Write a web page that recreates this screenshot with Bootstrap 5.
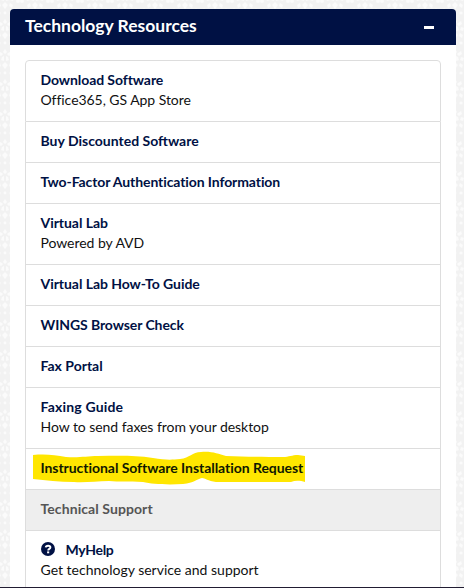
<!DOCTYPE html>
<html lang="en">
<head>
<meta charset="utf-8">
<meta name="viewport" content="width=device-width, initial-scale=1">
<title>Technology Resources</title>
<link href="https://cdn.jsdelivr.net/npm/bootstrap@5.3.0/dist/css/bootstrap.min.css" rel="stylesheet">
<style>
body{height:588px;font-family:Lato,"Open Sans",sans-serif;font-size:14px;line-height:20px;color:#111;padding:9px 8px 0 10px;border-bottom:1px solid #211c32;background:#f2f2f2}
.damask{z-index:-1}
.panel{--bs-card-border-width:0;height:100%;border-radius:4px 4px 0 0}
.panel-head{flex:none;height:36px;background:#001144;padding:0 22px 3px 15px}
.panel-title{font-size:17.5px;font-weight:700;line-height:20px}
.toggle-bar{width:10px;height:3px;margin-top:4px}
.panel-body{padding:15px 15px 0}
.links{--bs-list-group-border-color:#ddd;--bs-list-group-border-radius:4px;--bs-list-group-color:#111;letter-spacing:-.05px}
.links .list-group-item{padding:9px 14.5px 11px}
.links a{color:#001144;font-weight:700;text-decoration:none}
.links .section-row{background:#eee;color:#555;font-weight:700;letter-spacing:.08px}
.ls-a{letter-spacing:-.1px}
.ls-b{letter-spacing:-.08px}
.ls-c{letter-spacing:.18px}
.ls-d{letter-spacing:-.3px}
.ls-0{letter-spacing:0}
.marker{left:6px;top:2px;width:276px;height:36px}
.links .marked{color:#101800}
.help-icon{width:14px;height:14px;margin:-2px 11px 0 0}
</style>
</head>
<body class="overflow-hidden">
<svg class="damask position-absolute top-0 start-0 w-100 h-100" aria-hidden="true">
<defs><pattern id="damask" width="30" height="30" patternUnits="userSpaceOnUse" patternTransform="translate(-10 -14)">
<g fill="#fbfbfb">
<path d="M15 3l2 3-2 2-2-2zM13 8l-4-3-1 3 3 2zM17 8l4-3 1 3-3 2zM12 11l2-1v5l-3-1zM18 11l-2-1v5l3-1zM9 11l-3 1 1 3 3-1zM21 11l3 1-1 3-3-1zM15 16l3 3-3 4-3-4zM10 17l1 3-3 2-1-3zM20 17l-1 3 3 2 1-3z"/>
<circle cx="0" cy="0" r="3"/><circle cx="30" cy="0" r="3"/><circle cx="0" cy="30" r="3"/><circle cx="30" cy="30" r="3"/>
<circle cx="3" cy="6" r="1.5"/><circle cx="27" cy="6" r="1.5"/><circle cx="2" cy="15" r="2"/><circle cx="28" cy="15" r="2"/><circle cx="4" cy="24" r="1.6"/><circle cx="26" cy="24" r="1.6"/><circle cx="9" cy="27" r="1.6"/><circle cx="21" cy="27" r="1.6"/><circle cx="15" cy="27" r="1.4"/>
</g></pattern></defs>
<rect width="100%" height="100%" fill="url(#damask)"/>
</svg>
<section class="card panel overflow-hidden">
  <div class="panel-head d-flex align-items-center justify-content-between text-white">
    <h1 class="panel-title m-0">Technology Resources</h1>
    <span class="toggle-bar bg-white" role="button" aria-label="Collapse"></span>
  </div>
  <div class="panel-body">
    <ul class="list-group links">
      <li class="list-group-item"><a href="#" class="ls-b">Download Software</a><div>Office365, GS App Store</div></li>
      <li class="list-group-item"><a href="#" class="ls-0">Buy Discounted Software</a></li>
      <li class="list-group-item"><a href="#" class="ls-a">Two-Factor Authentication Information</a></li>
      <li class="list-group-item"><a href="#">Virtual Lab</a><div>Powered by AVD</div></li>
      <li class="list-group-item"><a href="#">Virtual Lab How-To Guide</a></li>
      <li class="list-group-item"><a href="#" class="ls-b">WINGS Browser Check</a></li>
      <li class="list-group-item"><a href="#" class="ls-0">Fax Portal</a></li>
      <li class="list-group-item"><a href="#" class="ls-c">Faxing Guide</a><div>How to send faxes from your desktop</div></li>
      <li class="list-group-item">
        <svg class="marker position-absolute" viewBox="0 0 276 36" aria-hidden="true"><path fill="#ffe600" d="M1 4C14 3 23 4 34 6C48 7 54 5 66 5C84 5 101 4 121 7C133 9 139 9 148 8C158 7 160 1 169 1C180 0 186 3 194 5C215 6 235 6 251 6C257 6 260 4 266 4L273 5V31C269 30 264 29 259 31H184C176 30 173 27 170 27C165 28 162 32 151 33C134 34 120 33 111 31C96 30 87 31 77 30C64 30 53 32 42 31C27 31 14 29 1 28Z"/></svg>
        <a href="#" class="marked position-relative">Instructional Software Installation Request</a></li>
      <li class="list-group-item section-row">Technical Support</li>
      <li class="list-group-item"><div class="d-flex align-items-center"><svg class="help-icon" viewBox="0 0 14 14" aria-hidden="true"><circle cx="7" cy="7" r="7" fill="#001144"/><path d="M4.7 5.4C5 3.1 9.4 3.1 9.4 5.5C9.4 7 7.2 6.8 7.2 8.4" fill="none" stroke="#fff" stroke-width="1.9"/><path d="M6.1 9.4h2.1v1.9h-2.1z" fill="#fff"/></svg><a href="#" class="ls-d">MyHelp</a></div><div class="ls-0">Get technology service and support</div></li>
    </ul>
  </div>
</section>
<script src="https://cdn.jsdelivr.net/npm/bootstrap@5.3.0/dist/js/bootstrap.bundle.min.js"></script>
</body>
</html>
